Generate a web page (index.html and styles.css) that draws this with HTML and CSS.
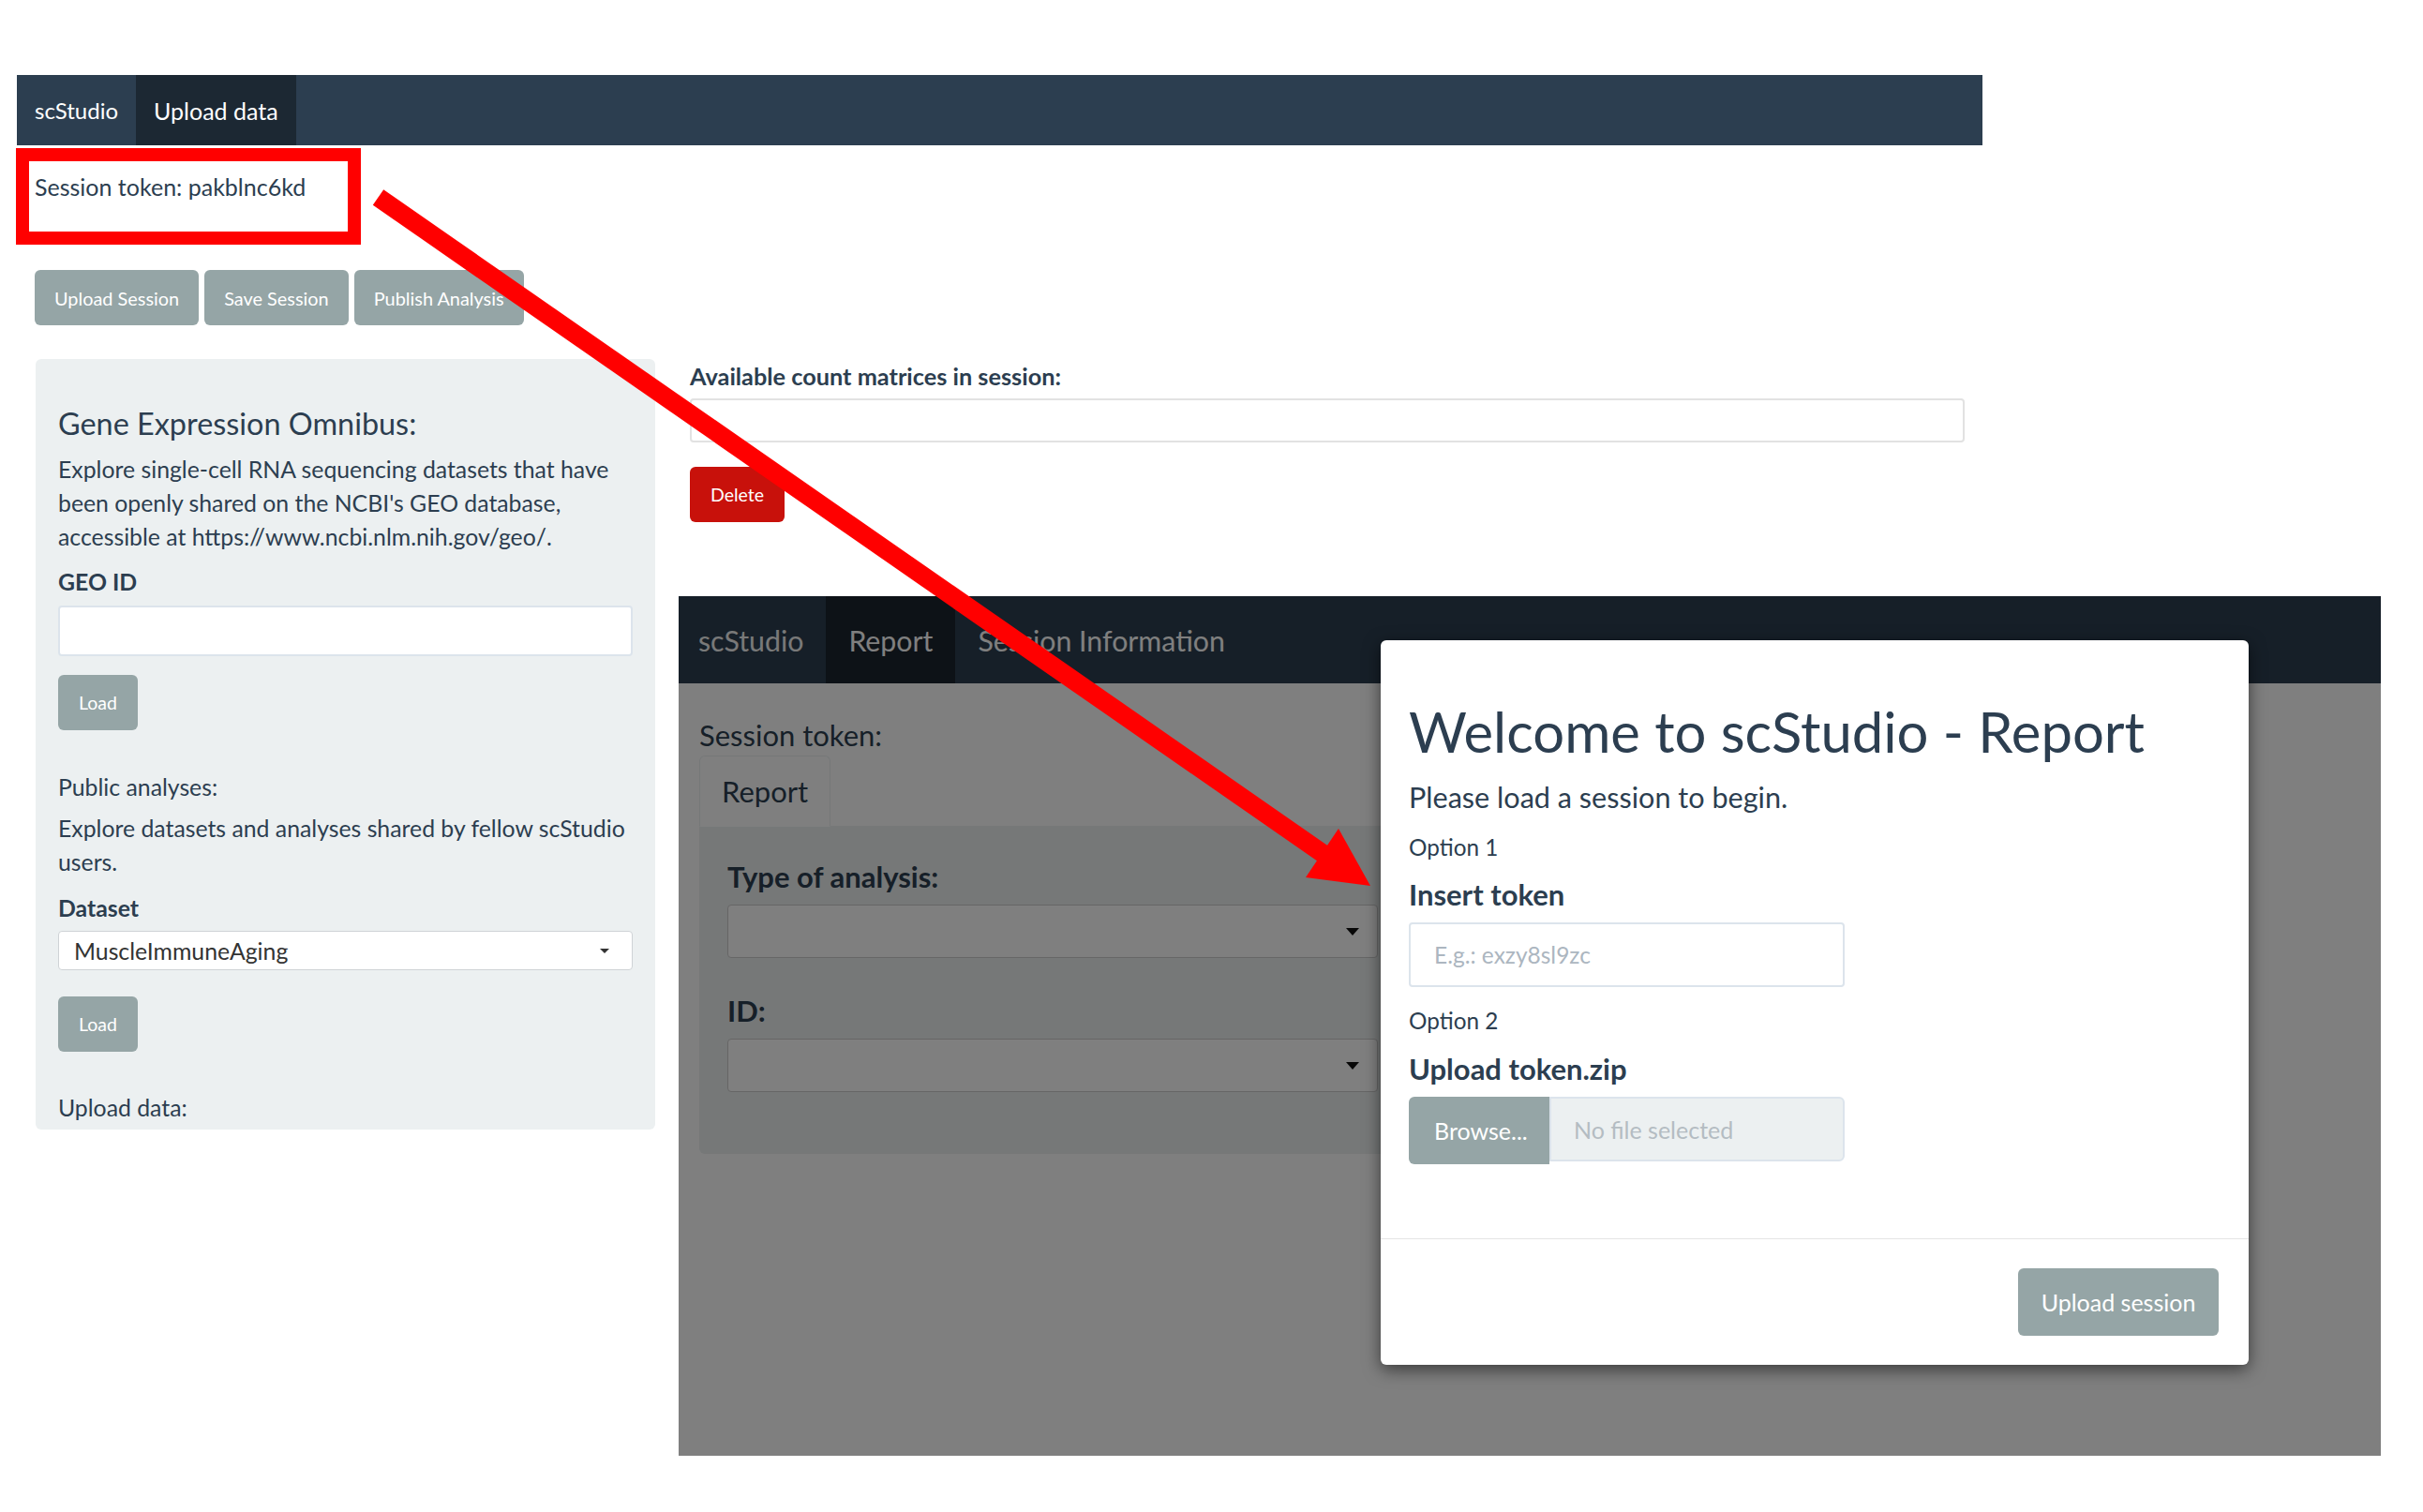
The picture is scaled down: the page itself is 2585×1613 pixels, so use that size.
FILE: index.html
```html
<!DOCTYPE html>
<html lang="en">
<head>
<meta charset="utf-8">
<title>scStudio – Upload data</title>
<link rel="stylesheet" href="styles.css">
</head>
<body>
<div class="canvas">

  <div class="app">
    <nav class="topnav">
      <span class="brand">scStudio</span>
      <span class="nav-tab active">Upload data</span>
    </nav>
    <div class="app-body">
      <div class="token">Session token: pakblnc6kd</div>
      <div class="btn-row">
        <button class="btn">Upload Session</button>
        <button class="btn">Save Session</button>
        <button class="btn">Publish Analysis</button>
      </div>
      <div class="cols">
        <aside class="well">
          <h3 class="well-title">Gene Expression Omnibus:</h3>
          <p class="desc">Explore single-cell RNA sequencing datasets that have been openly shared on the NCBI's GEO database, accessible at https://www.ncbi.nlm.nih.gov/geo/.</p>
          <label class="lbl">GEO ID</label>
          <div class="text-input"></div>
          <button class="btn btn-small load-1">Load</button>
          <p class="plain public">Public analyses:</p>
          <p class="desc desc-2">Explore datasets and analyses shared by fellow scStudio users.</p>
          <label class="lbl lbl-dataset">Dataset</label>
          <div class="select"><span>MuscleImmuneAging</span><i class="caret"></i></div>
          <button class="btn btn-small load-2">Load</button>
          <p class="plain upload">Upload data:</p>
        </aside>
        <main class="main">
          <div class="main-label">Available count matrices in session:</div>
          <div class="matrix-box"></div>
          <button class="btn btn-danger">Delete</button>
        </main>
      </div>
    </div>
  </div>

  <section class="report">
    <nav class="rnav">
      <span class="rbrand">scStudio</span>
      <span class="rtab active">Report</span>
      <span class="rtab">Session Information</span>
    </nav>
    <div class="rbody">
      <div class="rtoken">Session token:</div>
      <div class="rtabs"><span class="rtabs-item">Report</span></div>
      <div class="rwell">
        <div class="rlabel">Type of analysis:</div>
        <div class="rselect"><i class="rcaret"></i></div>
        <div class="rlabel rlabel-id">ID:</div>
        <div class="rselect"><i class="rcaret"></i></div>
      </div>
    </div>
    <div class="backdrop"></div>
    <div class="modal">
      <div class="modal-body">
        <h1 class="modal-title">Welcome to scStudio - Report</h1>
        <p class="lead">Please load a session to begin.</p>
        <p class="opt">Option 1</p>
        <div class="mlabel">Insert token</div>
        <div class="token-input"><span class="placeholder">E.g.: exzy8sl9zc</span></div>
        <p class="opt opt-2">Option 2</p>
        <div class="mlabel">Upload token.zip</div>
        <div class="file-row">
          <span class="browse">Browse...</span>
          <span class="file-field">No file selected</span>
        </div>
      </div>
      <div class="modal-footer">
        <button class="btn btn-upload">Upload session</button>
      </div>
    </div>
  </section>

  <div class="annot-box"></div>
  <svg class="arrow" width="2585" height="1613" viewBox="0 0 2585 1613" aria-hidden="true">
    <polygon points="397.8,218.7 409.2,202.3 1425.7,908.4 1414.3,924.8" fill="#ff0000"/>
    <polygon points="1428,884 1462,945 1393,936" fill="#ff0000"/>
  </svg>
</div>
</body>
</html>
```

FILE: styles.css
```css
* { box-sizing: border-box; }

body {
  margin: 0;
  background: #ffffff;
  font-family: Lato, "Liberation Sans", sans-serif;
  color: #2c3e50;
}

.canvas {
  position: relative;
  width: 2585px;
  height: 1613px;
  overflow: hidden;
  padding-top: 80px;
}

/* ---------- left app ---------- */
.app {
  margin-left: 18px;
  width: 2097px;
}

.topnav {
  display: flex;
  height: 75px;
  background: #2c3e50;
}
.topnav .brand {
  display: flex;
  align-items: center;
  padding: 0 19px;
  font-size: 24px;
  color: #ffffff;
}
.topnav .nav-tab {
  display: flex;
  align-items: center;
  padding: 0 19px;
  font-size: 25px;
  color: #ffffff;
}
.topnav .nav-tab.active { background: #1c2833; }

.app-body { padding: 26px 19px 0; }

.token {
  font-size: 25px;
  line-height: 36px;
  height: 36px;
}

.btn {
  border: none;
  border-radius: 6px;
  background: #95a5a6;
  color: #ffffff;
  font-family: inherit;
  cursor: pointer;
}

.btn-row {
  display: flex;
  gap: 6px;
  margin-top: 71px;
}
.btn-row .btn {
  height: 59px;
  padding: 0 21px;
  font-size: 19.9px;
}

.cols {
  display: flex;
  gap: 37px;
  margin-top: 36px;
}

.well {
  flex: 0 0 661px;
  height: 822px;
  margin-left: 1px;
  background: #ecf0f1;
  border-radius: 6px;
  padding: 24px 24px 0;
  overflow: hidden;
}
.well-title {
  margin: 27px 0 13.5px;
  font-size: 32.4px;
  line-height: 35px;
  font-weight: 400;
}
.desc {
  margin: 0 -8px 12px 0;
  font-size: 24.8px;
  line-height: 36px;
}
.lbl {
  display: block;
  font-size: 24.8px;
  line-height: 36px;
  font-weight: 700;
  margin-bottom: 7.5px;
}
.text-input {
  height: 54px;
  background: #ffffff;
  border: 2px solid #dce4ec;
  border-radius: 4px;
}
.btn-small {
  display: block;
  height: 59px;
  padding: 0 22px;
  font-size: 19.5px;
}
.load-1 { margin-top: 20px; }
.plain {
  margin: 0;
  font-size: 24.8px;
  line-height: 36px;
}
.public { margin-top: 42.5px; margin-bottom: 8px; }
.desc-2 { margin-bottom: 13px; }
.lbl-dataset { margin-bottom: 6.5px; }
.select {
  display: flex;
  align-items: center;
  justify-content: space-between;
  height: 42px;
  padding: 0 24px 0 16px;
  background: #ffffff;
  border: 1px solid #cfd3d6;
  border-radius: 4px;
  font-size: 24.8px;
  color: #333333;
}
.caret {
  width: 0;
  height: 0;
  border-left: 5px solid transparent;
  border-right: 5px solid transparent;
  border-top: 5px solid #333333;
}
.load-2 { margin-top: 28px; }
.upload { margin-top: 41.5px; }

.main { flex: 1; }
.main-label {
  font-size: 25.3px;
  line-height: 36px;
  font-weight: 700;
}
.matrix-box {
  margin-top: 6px;
  height: 47px;
  border: 2px solid #e2e2e2;
  border-radius: 4px;
}
.btn-danger {
  margin-top: 26px;
  height: 59px;
  padding: 0 22px;
  font-size: 19.5px;
  background: #c8110b;
}

/* ---------- embedded report screenshot ---------- */
.report {
  position: absolute;
  left: 724px;
  top: 636px;
  width: 1816px;
  height: 917px;
  background: #ffffff;
  overflow: hidden;
}
.rnav {
  display: flex;
  height: 93px;
  background: #2c3e50;
}
.rbrand {
  display: flex;
  align-items: center;
  padding: 0 24px 0 21px;
  font-size: 30.3px;
  color: #f2f2f2;
}
.rtab {
  display: flex;
  align-items: center;
  padding: 0 24px;
  font-size: 30.3px;
  color: #ffffff;
}
.rtab.active { background: #1a242f; }

.rbody { padding: 33px 22px 0; }
.rtoken {
  font-size: 31px;
  line-height: 44px;
}
.rtabs {
  display: flex;
  border-bottom: 1px solid #ecf0f1;
  width: 1000px;
}
.rtabs-item {
  padding: 15px 23px;
  margin-bottom: -1px;
  font-size: 31px;
  line-height: 44px;
  background: #ffffff;
  border: 1px solid #ecf0f1;
  border-bottom-color: #ffffff;
  border-radius: 6px 6px 0 0;
}
.rwell {
  width: 754px;
  height: 349px;
  background: #ecf0f1;
  border-radius: 0 0 6px 6px;
  padding: 31px 30px 0;
}
.rlabel {
  font-size: 31px;
  line-height: 44px;
  font-weight: 700;
}
.rlabel-id { margin-top: 34px; }
.rselect {
  display: flex;
  align-items: center;
  justify-content: flex-end;
  margin-top: 8px;
  height: 57px;
  padding-right: 19px;
  background: #ffffff;
  border: 1px solid #cccccc;
  border-radius: 4px;
}
.rcaret {
  width: 0;
  height: 0;
  border-left: 7px solid transparent;
  border-right: 7px solid transparent;
  border-top: 8px solid #111111;
}

.backdrop {
  position: absolute;
  inset: 0;
  background: rgba(0, 0, 0, 0.5);
}

.modal {
  position: absolute;
  left: 749px;
  top: 47px;
  width: 926px;
  height: 773px;
  display: flex;
  flex-direction: column;
  background: #ffffff;
  border-radius: 6px;
  box-shadow: 0 5px 18px rgba(0, 0, 0, 0.55);
}
.modal-body {
  height: 638px;
  padding: 0 30px;
}
.modal-title {
  margin: 65px 0 16px;
  font-size: 59.8px;
  line-height: 65px;
  font-weight: 400;
}
.lead {
  margin: 0 0 13px;
  font-size: 30.6px;
  line-height: 44px;
}
.opt {
  margin: 0 0 11px;
  font-size: 24.3px;
  line-height: 35px;
}
.opt-2 { margin: 18px 0 12px; }
.mlabel {
  font-size: 31px;
  line-height: 44px;
  font-weight: 700;
  margin-bottom: 8px;
}
.token-input {
  display: flex;
  align-items: center;
  width: 465px;
  height: 69px;
  padding-left: 25px;
  border: 2px solid #dce4ec;
  border-radius: 4px;
}
.placeholder {
  font-size: 24.5px;
  color: #acb6c0;
}
.file-row {
  display: flex;
  width: 465px;
  height: 72px;
}
.browse {
  display: flex;
  align-items: center;
  width: 150px;
  padding-left: 27px;
  background: #95a5a6;
  color: #ffffff;
  font-size: 25px;
  border-radius: 6px 0 0 6px;
}
.file-field {
  flex: 1;
  display: flex;
  align-items: center;
  height: 69px;
  padding-left: 24px;
  background: #ecf0f1;
  border: 2px solid #dce4ec;
  border-radius: 0 6px 6px 0;
  color: #b4bcc2;
  font-size: 25px;
}
.modal-footer {
  flex: 1;
  display: flex;
  justify-content: flex-end;
  align-items: flex-start;
  padding: 31px 32px 0;
  border-top: 1px solid #e5e5e5;
}
.btn-upload {
  width: 214px;
  height: 72px;
  font-size: 25px;
}

/* ---------- annotations ---------- */
.annot-box {
  position: absolute;
  left: 17px;
  top: 158px;
  width: 368px;
  height: 103px;
  border: 14px solid #ff0000;
}
.arrow {
  position: absolute;
  left: 0;
  top: 0;
  pointer-events: none;
}
```
